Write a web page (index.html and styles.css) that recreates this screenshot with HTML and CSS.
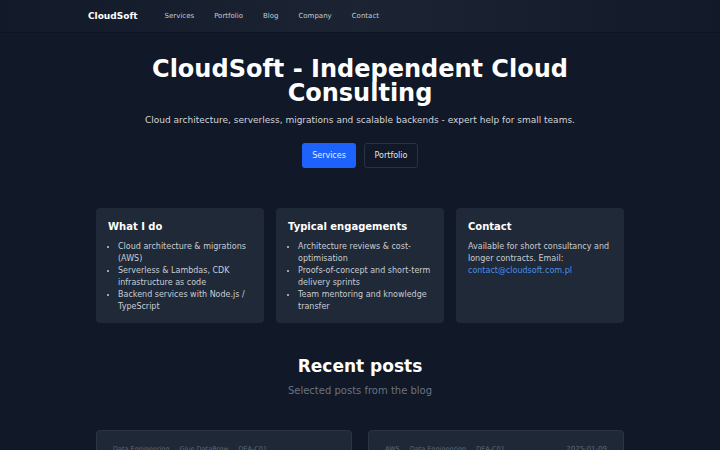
FILE: index.html
```html
<!DOCTYPE html>
<html lang="en">
<head>
<meta charset="utf-8">
<title>CloudSoft</title>
<link rel="stylesheet" href="styles.css">
</head>
<body>
<header class="topbar">
  <nav class="nav">
    <a class="brand" href="#">CloudSoft</a>
    <div class="links">
      <a href="#">Services</a>
      <a href="#">Portfolio</a>
      <a href="#">Blog</a>
      <a href="#">Company</a>
      <a href="#">Contact</a>
    </div>
  </nav>
</header>
<main class="main">
  <section class="hero">
    <h1>CloudSoft - Independent Cloud Consulting</h1>
    <p class="lead">Cloud architecture, serverless, migrations and scalable backends - expert help for small teams.</p>
    <div class="actions">
      <a class="btn primary" href="#">Services</a>
      <a class="btn ghost" href="#">Portfolio</a>
    </div>
  </section>
  <section class="cards">
    <div class="card">
      <h3>What I do</h3>
      <ul>
        <li>Cloud architecture &amp; migrations (AWS)</li>
        <li>Serverless &amp; Lambdas, CDK infrastructure as code</li>
        <li>Backend services with Node.js / TypeScript</li>
      </ul>
    </div>
    <div class="card">
      <h3>Typical engagements</h3>
      <ul>
        <li>Architecture reviews &amp; cost-optimisation</li>
        <li>Proofs-of-concept and short-term delivery sprints</li>
        <li>Team mentoring and knowledge transfer</li>
      </ul>
    </div>
    <div class="card">
      <h3>Contact</h3>
      <p>Available for short consultancy and longer contracts. Email: <a href="#">contact@cloudsoft.com.pl</a></p>
    </div>
  </section>
  <section class="posts-head">
    <h2>Recent posts</h2>
    <p>Selected posts from the blog</p>
  </section>
  <section class="posts">
    <article class="post">
      <div class="meta">
        <div class="tags"><span>Data Engineering</span><span>Glue DataBrew</span><span>DEA-C01</span></div>
      </div>
    </article>
    <article class="post">
      <div class="meta">
        <div class="tags"><span>AWS</span><span>Data Engineering</span><span>DEA-C01</span></div>
        <span class="date">2025-01-09</span>
      </div>
    </article>
  </section>
</main>
</body>
</html>
```
FILE: styles.css
```css
* { box-sizing: border-box; }
html, body { margin: 0; padding: 0; }
body {
  background: #111827;
  color: #d1d5db;
  font-family: "DejaVu Sans", "Liberation Sans", sans-serif;
  overflow: hidden;
}
a { text-decoration: none; color: inherit; }

.topbar {
  height: 33px;
  background: linear-gradient(90deg, #121a2a 0%, #1c2434 50%, #121a2a 100%);
  border-bottom: 1px solid #0e1422;
}
.nav {
  width: 544px;
  margin: 0 auto;
  height: 32px;
  display: flex;
  align-items: center;
}
.brand {
  color: #ffffff;
  font-weight: bold;
  font-size: 9px;
  margin-right: 27px;
}
.links { display: flex; gap: 20px; }
.links a { color: #c4c9d2; font-size: 7px; }

.main { width: 528px; margin: 0 auto; }

.hero { text-align: center; padding-top: 24px; }
.hero h1 {
  margin: 0;
  color: #ffffff;
  font-size: 24px;
  line-height: 24px;
  font-weight: bold;
}
.lead {
  margin: 8px 0 0;
  font-size: 9px;
  line-height: 14px;
  color: #d1d5db;
}
.actions {
  margin-top: 16px;
  display: flex;
  justify-content: center;
  gap: 8px;
}
.btn {
  display: block;
  width: 54px;
  height: 25px;
  line-height: 23px;
  font-size: 8px;
  text-align: center;
  border-radius: 3px;
  border: 1px solid transparent;
}
.primary { background: #1d62fb; color: #e8eefc; }
.ghost { border-color: #2a3242; color: #e2e5ea; background: #111827; }

.cards {
  margin-top: 40px;
  display: grid;
  grid-template-columns: repeat(3, 1fr);
  gap: 12px;
}
.card {
  background: #1f2937;
  border-radius: 4px;
  padding: 13px 12px 10px;
  height: 115px;
}
.card h3 {
  margin: 0;
  color: #ffffff;
  font-size: 10px;
  line-height: 12px;
}
.card ul {
  margin: 8px 0 0;
  padding-left: 10px;
  font-size: 8px;
  line-height: 12px;
  color: #c9cdd4;
}
.card p {
  margin: 8px 0 0;
  font-size: 8px;
  line-height: 12px;
  color: #c9cdd4;
}
.card p a { color: #4b8fe6; }

.posts-head { text-align: center; margin-top: 32px; }
.posts-head h2 {
  margin: 0;
  color: #ffffff;
  font-size: 17px;
  line-height: 22px;
}
.posts-head p {
  margin: 7px 0 0;
  font-size: 10px;
  line-height: 14px;
  color: #6b7280;
}

.posts {
  margin-top: 32px;
  display: grid;
  grid-template-columns: 1fr 1fr;
  gap: 16px;
}
.post {
  background: #1e2837;
  border: 1px solid #2c3545;
  border-radius: 4px;
  height: 80px;
  padding: 14px 16px;
}
.meta {
  display: flex;
  justify-content: space-between;
  align-items: center;
  font-size: 6.5px;
  color: #5f6978;
}
.tags { display: flex; gap: 10px; }
.date { font-size: 7px; }
```
